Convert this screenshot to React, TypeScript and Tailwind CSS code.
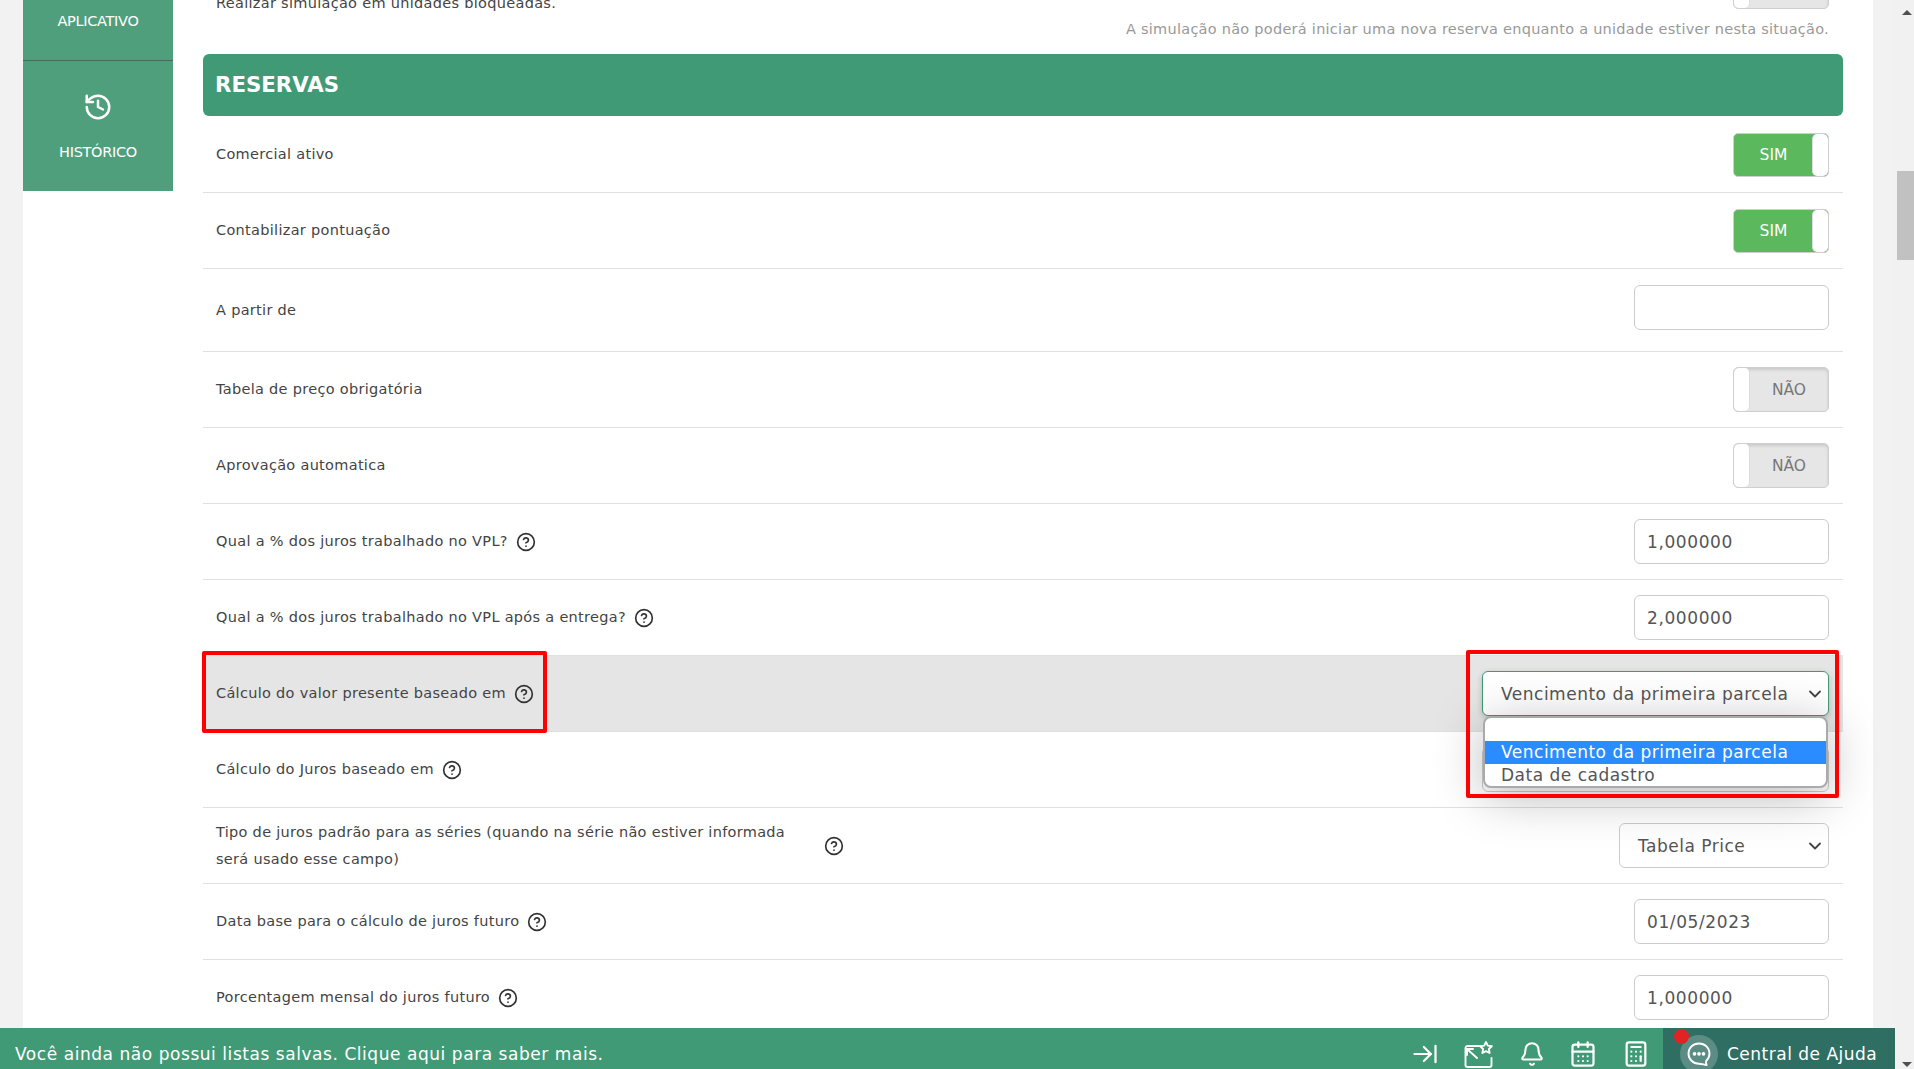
import React from "react";
import { ArrowRightToLine, Bell, Calculator, CalendarDays, ChevronDown, CircleHelp, History } from "lucide-react";

const font = "font-['DejaVu_Sans','Liberation_Sans',sans-serif]";

function Help() {
  return <CircleHelp className="h-5 w-5 shrink-0 text-[#333]" strokeWidth={2} />;
}

function Toggle({ on }: { on: boolean }) {
  if (on) {
    return (
      <div className="flex h-[44px] w-[96px] overflow-hidden rounded-[5px] border border-[#cfcfcf] bg-[#5cb85c]">
        <div className="flex flex-1 items-center justify-center pl-[1px] pt-[3px] text-[15.5px] text-white">SIM</div>
        <div className="w-[16px] rounded-[5px] border-l border-[#ddd] bg-white" />
      </div>
    );
  }
  return (
    <div className="flex h-[45px] w-[96px] overflow-hidden rounded-[5px] border border-[#cfcfcf] bg-[#e6e6e6] shadow-[inset_0_2px_3px_rgba(0,0,0,0.12)]">
      <div className="w-[16px] rounded-[5px] border-r border-[#ddd] bg-white" />
      <div className="flex flex-1 items-center justify-center pt-[3px] text-[15.5px] text-[#777]">NÃO</div>
    </div>
  );
}

function Field({ value }: { value?: string }) {
  return (
    <div className="flex h-[45px] w-[195px] items-center rounded-[6px] border border-[#ccc] bg-white pl-[12px] pt-[2px] text-[17px] tracking-[0.6px] text-[#555]">
      {value}
    </div>
  );
}

function Select({ value, wide, active }: { value?: string; wide?: boolean; active?: boolean }) {
  return (
    <div
      className={`flex h-[45px] items-center justify-between rounded-[6px] border bg-white pl-[18px] pr-[3px] text-[17px] tracking-[0.5px] text-[#555] ${wide ? "w-[347px]" : "w-[210px]"} ${active ? "border-[#419a76] shadow-[0_2px_6px_rgba(0,0,0,0.2)]" : "border-[#ccc]"}`}
    >
      <span className="pt-[2px]">{value}</span>
      <ChevronDown className="h-5 w-5 text-[#444]" strokeWidth={2.2} />
    </div>
  );
}

function Row({ children, control, tall, active }: { children: React.ReactNode; control: React.ReactNode; tall?: boolean; active?: boolean }) {
  return (
    <div
      className={`flex items-center justify-between border-b border-[#e0e0e0] pl-[13px] pr-[14px] ${tall ? "h-[83px] pb-[6px]" : "h-[76px]"} ${active ? "bg-[#e5e5e5]" : ""}`}
    >
      <div className={`flex items-center gap-2 text-[14.5px] tracking-[0.3px] text-[#444] ${tall ? "pt-[8px]" : "pt-[1px]"}`}>{children}</div>
      {control}
    </div>
  );
}

function MailStar() {
  return (
    <svg width="30" height="28" viewBox="0 0 30 28" fill="none" stroke="white" strokeWidth="1.9" strokeLinecap="round" strokeLinejoin="round">
      <path d="M15 6H3.5a2 2 0 0 0-2 2v17a2 2 0 0 0 2 2h22a2 2 0 0 0 2-2v-7" />
      <path d="M3 9l10 9" />
      <path d="M3 9v6M3 9h6" />
      <path d="M22 2l1.8 3.6 4 .6-2.9 2.8.7 4-3.6-1.9-3.6 1.9.7-4-2.9-2.8 4-.6z" />
    </svg>
  );
}

function ChatDots() {
  return (
    <svg width="26" height="26" viewBox="0 0 26 26" fill="none" stroke="white" strokeWidth="1.9" strokeLinecap="round" strokeLinejoin="round">
      <path d="M13 2.5C7 2.5 2.5 6.9 2.5 12.6S7 22.7 13 22.7c2.5 0 4.8.9 7.6 1.3-.6-1.5-.8-2.8-.4-4 2-1.9 3.3-4.4 3.3-7.4C23.5 6.9 19 2.5 13 2.5z" />
      <circle cx="8.5" cy="12.8" r="0.9" fill="white" />
      <circle cx="13" cy="12.8" r="0.9" fill="white" />
      <circle cx="17.5" cy="12.8" r="0.9" fill="white" />
    </svg>
  );
}

export default function App() {
  return (
    <div className={`relative flex h-[1069px] w-full overflow-hidden bg-[#f2f2f2] ${font}`}>
      <div className="flex-1 pl-[23px] pr-[22px]">
        <div className="flex h-[1200px] bg-white">
          <aside className="w-[150px] shrink-0 text-[14.5px] text-white [letter-spacing:-0.3px]">
            <div className="flex h-[61px] justify-center border-b border-[#3f6f5c] bg-[#4f9f7d] pt-[12px] leading-[18px]">APLICATIVO</div>
            <div className="flex h-[130px] flex-col items-center bg-[#4f9f7d] pt-[31px]">
              <History className="h-[30px] w-[30px]" strokeWidth={2} />
              <span className="mt-[21px] leading-[18px]">HISTÓRICO</span>
            </div>
          </aside>
          <main className="ml-[30px] w-[1640px] -mt-[47px]">
            <div className="flex h-[56px] items-end justify-between pl-[13px] pr-[14px]">
              <span className="-mb-[3px] text-[14.5px] leading-[18px] tracking-[0.3px] text-[#444]">Realizar simulação em unidades bloqueadas.</span>
              <Toggle on={false} />
            </div>
            <p className="mt-[11px] pr-[14px] text-right text-[14.5px] leading-[18px] tracking-[0.26px] text-[#999]">
              A simulação não poderá iniciar uma nova reserva enquanto a unidade estiver nesta situação.
            </p>
            <h2 className="mb-[1px] mt-[16px] flex h-[62px] items-center rounded-[6px] bg-[#419a76] pl-[12px] text-[21.3px] font-bold text-white">RESERVAS</h2>
            <Row control={<Toggle on />}>Comercial ativo</Row>
            <Row control={<Toggle on />}>Contabilizar pontuação</Row>
            <Row tall control={<Field />}>A partir de</Row>
            <Row control={<Toggle on={false} />}>Tabela de preço obrigatória</Row>
            <Row control={<Toggle on={false} />}>Aprovação automatica</Row>
            <Row control={<Field value="1,000000" />}>Qual a % dos juros trabalhado no VPL? <Help /></Row>
            <Row control={<Field value="2,000000" />}>Qual a % dos juros trabalhado no VPL após a entrega? <Help /></Row>
            <Row
              active
              control={
                <div className="relative">
                  <Select wide active value="Vencimento da primeira parcela" />
                  <div className="absolute left-[1px] top-[45px] z-20 w-[345px] overflow-hidden rounded-[8px] border-2 border-[#aaa] bg-white text-[17px] leading-[23px] tracking-[0.5px] text-[#555] shadow-[0_8px_50px_rgba(0,0,0,0.28)]">
                    <div className="h-[23px]" />
                    <div className="bg-[#2a8cff] pl-[16px] text-white">Vencimento da primeira parcela</div>
                    <div className="h-[22px] pl-[16px] leading-[22px]">Data de cadastro</div>
                  </div>
                </div>
              }
            >
              Cálculo do valor presente baseado em <Help />
            </Row>
            <Row control={<Select wide />}>Cálculo do Juros baseado em <Help /></Row>
            <Row control={<Select value="Tabela Price" />}>
              <span className="w-[600px] leading-[27px]">
                Tipo de juros padrão para as séries (quando na série não estiver informada
                <br />
                será usado esse campo)
              </span>
              <Help />
            </Row>
            <Row control={<Field value="01/05/2023" />}>Data base para o cálculo de juros futuro <Help /></Row>
            <Row control={<Field value="1,000000" />}>Porcentagem mensal do juros futuro <Help /></Row>
          </main>
        </div>
      </div>

      <div className="relative w-[19px] shrink-0 bg-[#f1f1f1]">
        <div className="absolute left-[7px] top-[10px] h-0 w-0 border-x-[5px] border-b-[5px] border-x-transparent border-b-[#505050]" />
        <div className="absolute left-[2px] right-0 top-[171px] h-[89px] bg-[#c1c1c1]" />
        <div className="absolute bottom-[2px] left-[7px] h-0 w-0 border-x-[5px] border-t-[5px] border-x-transparent border-t-[#505050]" />
      </div>

      <div className="absolute bottom-0 left-0 z-30 flex h-[41px] w-[1895px] items-center bg-[#419a76] text-white">
        <span className="mt-[12px] flex-1 pl-[15px] text-[17px] tracking-[0.55px]">Você ainda não possui listas salvas. Clique aqui para saber mais.</span>
        <div className="mt-[10px] flex w-[255px] items-center justify-between pl-[3px] pr-[13px]">
          <ArrowRightToLine className="h-[28px] w-[28px]" strokeWidth={1.9} />
          <MailStar />
          <Bell className="h-[26px] w-[26px]" strokeWidth={1.9} />
          <CalendarDays className="h-[28px] w-[28px]" strokeWidth={1.9} />
          <Calculator className="h-[28px] w-[28px]" strokeWidth={1.9} />
        </div>
        <div className="relative flex h-full w-[232px] items-center overflow-hidden bg-[#2f6e63]">
          <div className="ml-[17px] mt-[10px] flex h-[38px] w-[38px] shrink-0 items-center justify-center rounded-full bg-[#5b8d85]">
            <ChatDots />
          </div>
          <span className="ml-[9px] mt-[12px] whitespace-nowrap text-[17px] tracking-[0.5px]">Central de Ajuda</span>
          <div className="absolute left-[11px] top-[1px] h-[15px] w-[15px] rounded-full bg-[#e02424]" />
        </div>
      </div>

      <div className="pointer-events-none absolute left-[202px] top-[651px] z-40 h-[82px] w-[345px] rounded-[2px] border-[4px] border-[#ff0000]" />
      <div className="pointer-events-none absolute left-[1466px] top-[650px] z-40 h-[148px] w-[373px] rounded-[2px] border-[4px] border-[#ff0000]" />
    </div>
  );
}
